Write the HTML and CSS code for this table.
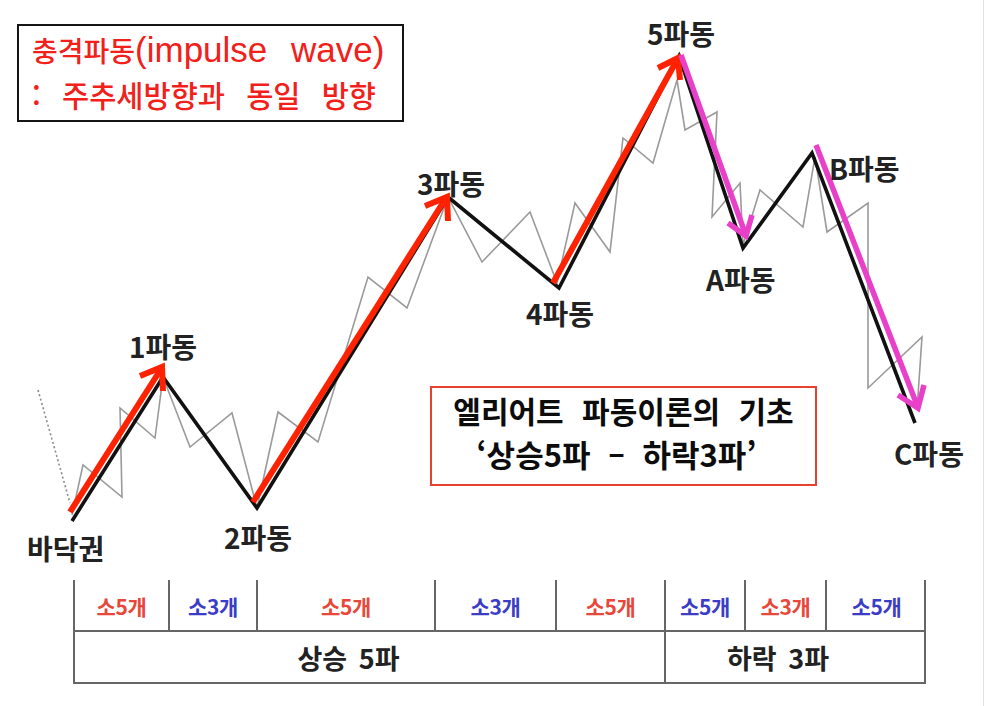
FILE: index.html
```html
<!DOCTYPE html>
<html lang="ko">
<head>
<meta charset="utf-8">
<title>엘리어트 파동이론의 기초</title>
<link rel="stylesheet" href="styles.css">
</head>
<body>
<div class="page">
  <div class="chart">
    <svg class="lines" width="987" height="580" viewBox="0 0 987 580" xmlns="http://www.w3.org/2000/svg">
      <line x1="38" y1="390" x2="70" y2="503" stroke="#8a8a8a" stroke-width="1.6" stroke-dasharray="2 2.5"/>
      <polyline fill="none" stroke="#9a9a9a" stroke-width="1.6" stroke-linejoin="miter"
        points="72,515 83,465 122,497 120,408 155,438 163,377 190,447 232,413 257,508 278,412 318,442 368,277 407,308 448,197 482,262 530,212 557,283 575,203 610,252 623,138 653,163 677,80 685,130 717,112 712,217 740,183 743,245 760,190 803,227 815,157 827,232 868,203 868,388 922,337 917,410"/>
      <polyline fill="none" stroke="#111" stroke-width="3.6" stroke-linejoin="miter"
        points="72,521 163,377 257,508 448,197 559,288 679,56 743,248 812,153 915,423"/>
      <g fill="none" stroke="#ff2200" stroke-width="6" stroke-linejoin="miter">
        <line x1="70" y1="512" x2="161" y2="369"/>
        <polyline points="140,376 162,367 163,391"/>
        <line x1="253" y1="502" x2="446" y2="198"/>
        <polyline points="425,206 447,197 448,221"/>
        <line x1="553" y1="283" x2="677" y2="60"/>
        <polyline points="658,68 678,58 680,80"/>
      </g>
      <g fill="none" stroke="#e940c9" stroke-width="5.5" stroke-linejoin="miter">
        <line x1="681" y1="55" x2="745" y2="233"/>
        <polyline points="752,215 746,236 728,223"/>
        <line x1="816" y1="145" x2="917" y2="405"/>
        <polyline points="924,385 918,408 898,395"/>
      </g>
    </svg>

    <div class="title-box">
      <p class="title-line">충격파동<span class="latin">(impulse wave)</span></p>
      <p class="title-line second">: 주추세방향과 동일 방향</p>
    </div>

    <div class="info-box">
      <p class="info-line">엘리어트 파동이론의 기초</p>
      <p class="info-line quote">‘상승5파 – 하락3파’</p>
    </div>

    <span class="label l-bottom">바닥권</span>
    <span class="label l-1">1파동</span>
    <span class="label l-2">2파동</span>
    <span class="label l-3">3파동</span>
    <span class="label l-4">4파동</span>
    <span class="label l-5">5파동</span>
    <span class="label l-a">A파동</span>
    <span class="label l-b">B파동</span>
    <span class="label l-c">C파동</span>
  </div>

  <div class="waves">
    <div class="row-small">
      <div class="cell red">소5개</div>
      <div class="cell blue">소3개</div>
      <div class="cell red">소5개</div>
      <div class="cell blue">소3개</div>
      <div class="cell red">소5개</div>
      <div class="cell blue">소5개</div>
      <div class="cell red">소3개</div>
      <div class="cell blue">소5개</div>
    </div>
    <div class="row-big">
      <div class="cell big up">상승 5파</div>
      <div class="cell big down">하락 3파</div>
    </div>
  </div>
</div>
</body>
</html>
```

FILE: styles.css
```css
* {
  box-sizing: border-box;
}

html, body {
  margin: 0;
  padding: 0;
  background: #ffffff;
}

body {
  font-family: "Noto Sans CJK KR", "Noto Sans", sans-serif;
  color: #1e1e1e;
}

.page {
  width: 984px;
  height: 706px;
  border-right: 1px solid #e2e2e2;
  overflow: hidden;
}

.chart {
  position: relative;
  height: 580px;
}

.lines {
  position: absolute;
  left: 0;
  top: 0;
}

/* top-left definition box */
.title-box {
  position: absolute;
  left: 17px;
  top: 24px;
  width: 387px;
  height: 98px;
  border: 2px solid #151515;
  background: #fff;
  padding: 0 0 0 13px;
  color: #f2201a;
}

.title-line {
  margin: 0;
  font-size: 28px;
  font-weight: 500;
  line-height: 44px;
  white-space: nowrap;
  word-spacing: 16px;
}

.title-line:first-child {
  margin-top: 2px;
}

.title-line.second {
  font-size: 29.5px;
  word-spacing: 13px;
}

.latin {
  font-family: "Liberation Sans", "Noto Sans CJK KR", sans-serif;
  font-size: 35px;
  font-weight: 400;
  word-spacing: 14px;
}

/* centre info box */
.info-box {
  position: absolute;
  left: 430px;
  top: 386px;
  width: 387px;
  height: 100px;
  border: 2px solid #e6402f;
  background: #fff;
  text-align: center;
  color: #0c0c0c;
  padding-top: 0;
}

.info-line {
  margin: 0;
  font-size: 30px;
  font-weight: 700;
  line-height: 44px;
  white-space: pre;
  word-spacing: 10px;
}

.info-line.quote {
  padding-right: 14px;
  word-spacing: 9px;
  font-size: 31px;
}

/* wave labels on the diagram */
.label {
  position: absolute;
  font-size: 28px;
  font-weight: 700;
  line-height: 1;
  color: #222;
  white-space: nowrap;
}

.l-bottom { left: 27px;  top: 534px; }
.l-1      { left: 129px; top: 332px; }
.l-2      { left: 224px; top: 523px; }
.l-3      { left: 417px; top: 169px; }
.l-4      { left: 526px; top: 299px; }
.l-5      { left: 647px; top: 19px; }
.l-a      { left: 706px; top: 265px; }
.l-b      { left: 829px; top: 154px; }
.l-c      { left: 894px; top: 439px; }

/* bottom table */
.waves {
  margin-left: 73px;
  width: 853px;
}

.row-small {
  display: grid;
  grid-template-columns: 95px 88px 178px 121px 109px 80px 81px 101px;
  height: 52px;
  border-right: 2px solid #666;
  border-bottom: 2px solid #666;
}

.row-big {
  display: grid;
  grid-template-columns: 591px 262px;
  height: 52px;
  border-right: 2px solid #666;
  border-bottom: 2px solid #666;
}

.cell {
  border-left: 2px solid #666;
  display: flex;
  align-items: center;
  justify-content: center;
  font-weight: 700;
  font-size: 21px;
  letter-spacing: -0.3px;
}

.row-small .cell {
  padding-top: 2px;
}

.red {
  color: #e8473a;
}

.blue {
  color: #3b3dc6;
}

.big {
  font-size: 27px;
  color: #222;
  word-spacing: 4px;
  letter-spacing: 0;
}

.big.up {
  padding-right: 42px;
}

.big.down {
  padding-right: 36px;
}
```
